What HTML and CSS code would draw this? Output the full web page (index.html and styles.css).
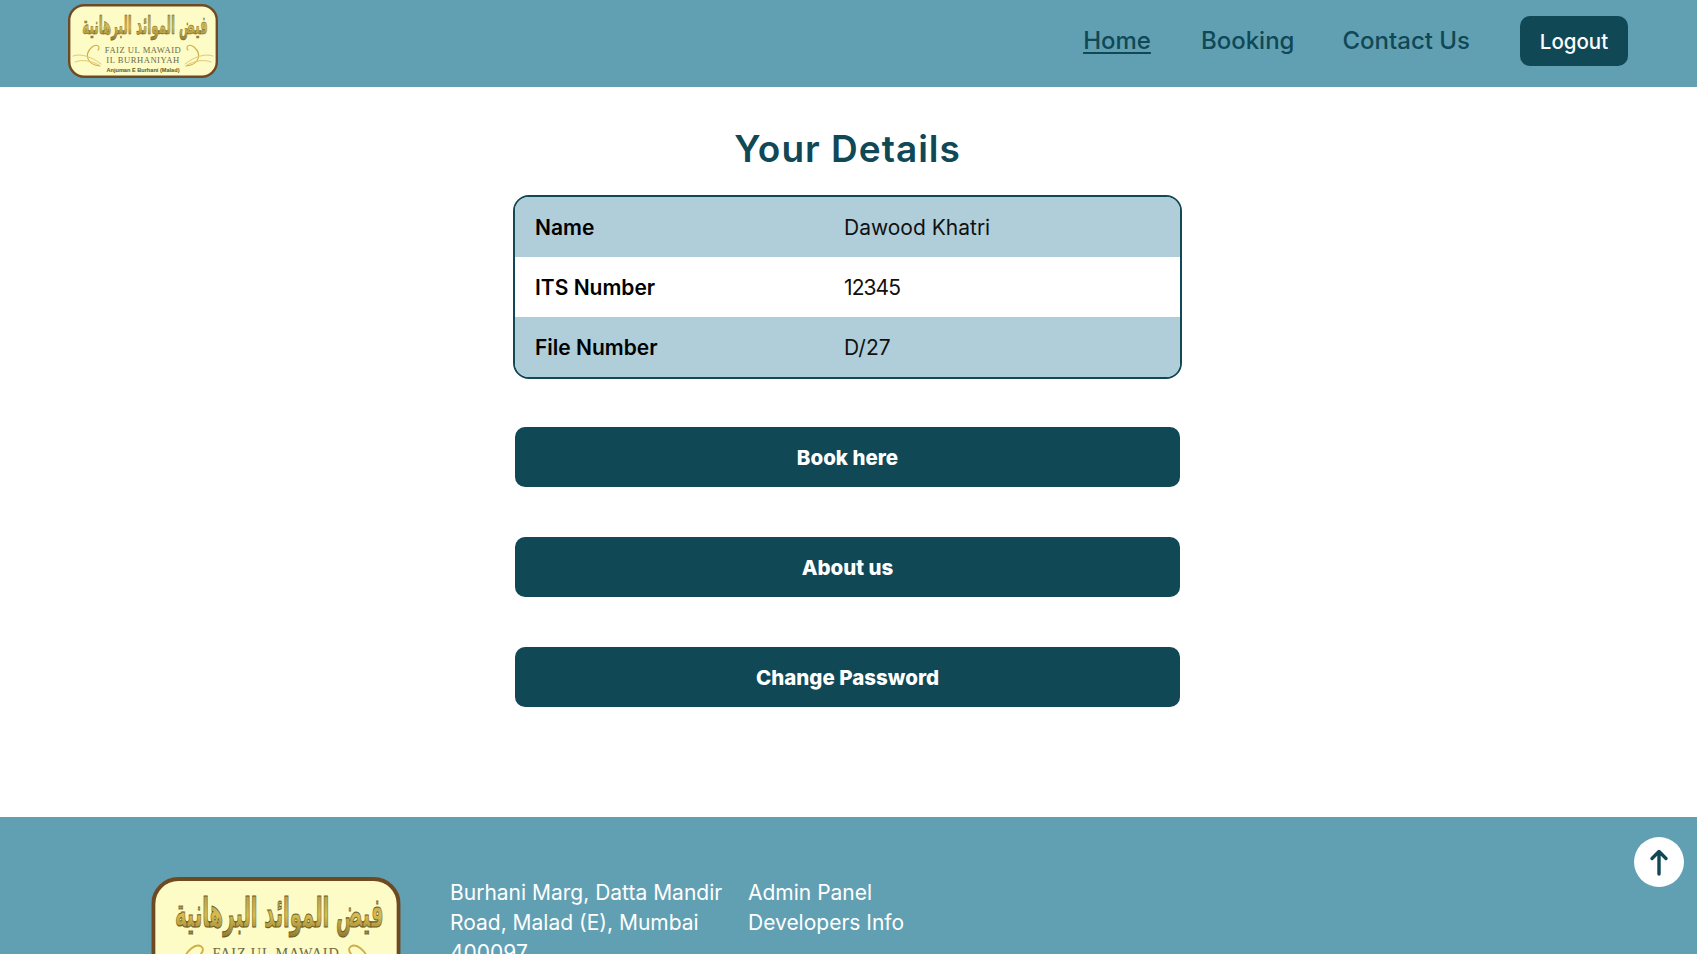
FILE: index.html
```html
<!DOCTYPE html>
<html lang="en">
<head>
<meta charset="utf-8">
<title>Your Details</title>
<link rel="stylesheet" href="styles.css">
</head>
<body>
<svg class="defs" width="0" height="0" aria-hidden="true">
  <defs>
    <linearGradient id="gold" x1="0" y1="0" x2="0" y2="1">
      <stop offset="0" stop-color="#a8954a"/>
      <stop offset="0.55" stop-color="#d8bd4e"/>
      <stop offset="1" stop-color="#8f7a32"/>
    </linearGradient>
    <symbol id="logo" viewBox="0 0 150 74">
      <rect x="1.2" y="1.2" width="147.6" height="71.6" rx="15" fill="#fdfbc6" stroke="#6e4a22" stroke-width="2.4"/>
      <text transform="translate(77 30) scale(1 2.1)" text-anchor="middle" class="logo-ar" fill="url(#gold)" stroke="#6b5a24" stroke-width="0.3" direction="rtl">فيض الموائد البرهانية</text>
      <path d="M32 62 C20 61 15 51 24 43 C29 39 33 43 30 46" fill="none" stroke="#cfae45" stroke-width="1.1" stroke-linecap="round"/>
      <path d="M5 52 C13 49 24 53 33 60 M7 58 C14 55 24 57 31 61" fill="none" stroke="#ddc466" stroke-width="0.9" stroke-linecap="round"/>
      <path d="M118 62 C130 61 135 51 126 43 C121 39 117 43 120 46" fill="none" stroke="#cfae45" stroke-width="1.1" stroke-linecap="round"/>
      <path d="M145 52 C137 49 126 53 117 60 M143 58 C136 55 126 57 119 61" fill="none" stroke="#ddc466" stroke-width="0.9" stroke-linecap="round"/>
      <text x="75" y="49" text-anchor="middle" class="logo-en">FAIZ UL MAWAID</text>
      <text x="75" y="59" text-anchor="middle" class="logo-en">IL BURHANIYAH</text>
      <text x="75" y="68" text-anchor="middle" class="logo-sub">Anjuman E Burhani (Malad)</text>
    </symbol>
  </defs>
</svg>

<header class="topbar">
  <svg class="logo-top" viewBox="0 0 150 74"><use href="#logo"/></svg>
  <nav class="nav">
    <a class="nav-link is-active" href="#">Home</a>
    <a class="nav-link" href="#">Booking</a>
    <a class="nav-link nav-contact" href="#">Contact Us</a>
    <a class="logout" href="#">Logout</a>
  </nav>
</header>

<main class="content">
  <h1 class="title">Your Details</h1>
  <div class="details">
    <div class="row row-tint"><span class="label">Name</span><span class="value">Dawood Khatri</span></div>
    <div class="row"><span class="label">ITS Number</span><span class="value value-num">12345</span></div>
    <div class="row row-tint"><span class="label">File Number</span><span class="value">D/27</span></div>
  </div>
  <div class="actions">
    <a class="action" href="#">Book here</a>
    <a class="action" href="#">About us</a>
    <a class="action" href="#">Change Password</a>
  </div>
</main>

<footer class="footer">
  <svg class="logo-foot" viewBox="0 0 150 74"><use href="#logo"/></svg>
  <p class="address">Burhani Marg, Datta Mandir Road, Malad (E), Mumbai 400097</p>
  <div class="links">
    <a href="#">Admin Panel</a>
    <a href="#">Developers Info</a>
  </div>
</footer>

<a class="to-top" href="#" aria-label="Back to top">
  <svg width="24" height="30" viewBox="0 0 24 30"><path d="M12 27V5M5 11.5L12 4.5L19 11.5" fill="none" stroke="#104856" stroke-width="3.4" stroke-linecap="round" stroke-linejoin="round"/></svg>
</a>
</body>
</html>
```
FILE: styles.css
```css
* { box-sizing: border-box; }
html, body { margin: 0; height: 954px; overflow: hidden; }
body { font-family: "Inter", "Liberation Sans", sans-serif; background: #fff; color: #000; }
a { text-decoration: none; color: inherit; }
.defs { position: absolute; }
.logo-ar { font-family: "DejaVu Sans", serif; font-size: 11.8px; font-weight: 700; }
.logo-en { font-family: "Liberation Serif", serif; font-size: 8.6px; letter-spacing: 0.5px; fill: #6d6a48; }
.logo-sub { font-family: "Liberation Sans", sans-serif; font-size: 5.6px; font-weight: 700; fill: #5c5a20; }

.topbar { height: 87px; background: #61a0b3; display: flex; align-items: flex-start; justify-content: space-between; padding: 4px 69px 0 68px; }
.logo-top { width: 150px; height: 74px; display: block; }
.nav { display: flex; align-items: center; gap: 50px; height: 74px; }
.nav-link { font-size: 24px; font-weight: 500; color: #104856; padding-bottom: 2px; }
.nav-link.is-active { text-decoration: underline; text-underline-offset: 3px; }
.nav-contact { margin-left: -2px; }
.logout { width: 108px; height: 50px; border-radius: 10px; background: #104856; color: #fff; font-size: 20.5px; font-weight: 500; display: flex; align-items: center; justify-content: center; }

.content { height: 730px; display: flex; flex-direction: column; align-items: center; padding: 38px 2px 0 0; }
.title { margin: 0; font-size: 37px; line-height: 48px; letter-spacing: 1px; font-weight: 600; color: #104856; }
.details { width: 669px; margin-top: 22px; border: 2px solid #104856; border-radius: 16px; overflow: hidden; }
.row { height: 60px; display: flex; align-items: center; padding-left: 20px; font-size: 21px; background: #fff; }
.row-tint { background: #b0ced9; }
.label { width: 309px; font-weight: 600; }
.value { font-weight: 400; color: #111; }
.value-num { letter-spacing: -0.9px; }
.actions { width: 665px; margin-top: 48px; display: flex; flex-direction: column; gap: 50px; }
.action { height: 60px; border-radius: 10px; background: #104856; color: #fff; font-size: 20.5px; font-weight: 800; display: flex; align-items: center; justify-content: center; }

.footer { height: 260px; background: #61a0b3; display: flex; align-items: flex-start; padding: 60px 0 0 151px; color: #fff; font-size: 21px; line-height: 30px; }
.logo-foot { width: 250px; height: 123px; display: block; flex: none; }
.address { width: 298px; margin: 1px 0 0 49px; }
.links { display: flex; flex-direction: column; margin-top: 1px; }
.to-top { position: fixed; left: 1634px; top: 837px; width: 50px; height: 50px; border-radius: 50%; background: #fff; display: flex; align-items: center; justify-content: center; }
```
